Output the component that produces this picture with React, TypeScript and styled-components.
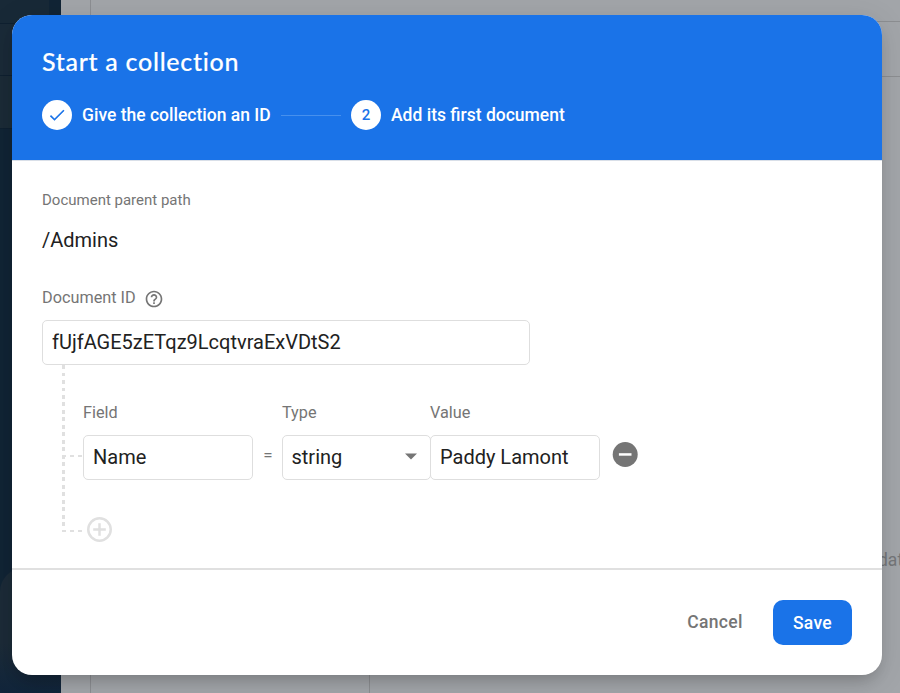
import React from "react";
import styled, { createGlobalStyle } from "styled-components";

const GlobalStyle = createGlobalStyle`
  * { box-sizing: border-box; }
  html, body { margin: 0; height: 100%; overflow: hidden; }
  body { font-family: Roboto, "Liberation Sans", sans-serif; color: #212121; }
  button, input { font-family: inherit; }
`;

const Page = styled.div`
  position: relative;
  display: flex;
  width: 900px;
  height: 693px;
  overflow: hidden;
  background: #a2a5a9;
`;

const Sidebar = styled.div`
  display: flex;
  flex: none;
  flex-direction: column;
  width: 61px;
  background: #112435;
`;

const SidebarItem = styled.div<{ $height: number; $tone: string }>`
  width: 49px;
  height: ${(p) => p.$height}px;
  background: ${(p) => p.$tone};
  border-bottom: 1px solid #0f2030;
`;

const SidebarCard = styled.div`
  width: 61px;
  height: 126px;
  margin-top: 439px;
  border-radius: 24px 0 0 0;
  background: linear-gradient(#1c2b38 60%, #11253b);
`;

const Gutter = styled.div`
  flex: none;
  width: 30px;
  border-right: 1px solid #8c8e92;
`;

const Main = styled.div`
  display: flex;
  flex: 1;
  flex-direction: column;
  min-width: 0;
`;

const MainRow = styled.div<{ $height: number }>`
  height: ${(p) => p.$height}px;
  border-bottom: 1px solid #8c8e91;
`;

const Columns = styled.div`
  display: flex;
  flex: 1;
`;

const ListColumn = styled.div`
  flex: none;
  width: 279px;
  border-right: 1px solid #8c8e91;
`;

const EmptyState = styled.div`
  flex: 1;
  min-width: 0;
  padding: 472px 0 0 508px;
  font-size: 17.5px;
  line-height: 22px;
  color: #747679;
  white-space: nowrap;
`;

const Dialog = styled.section`
  position: absolute;
  left: 12px;
  top: 15px;
  display: flex;
  flex-direction: column;
  width: 870px;
  height: 660px;
  border-radius: 20px;
  background: #fff;
  overflow: hidden;
  box-shadow: 0 10px 16px -6px rgba(0, 0, 0, 0.2), 0 5px 30px rgba(0, 0, 0, 0.1);
`;

const Header = styled.header`
  height: 146px;
  padding: 29px 30px 0;
  border-bottom: 1px solid #d9dfe8;
  background: #1a73e8;
  color: #fff;
`;

const Title = styled.h1`
  margin: 0;
  font-family: Lato, sans-serif;
  font-size: 25px;
  font-weight: 500;
  line-height: 35px;
  letter-spacing: 0.71px;
  -webkit-text-stroke: 0.15px #fff;
`;

const Steps = styled.div`
  display: flex;
  align-items: center;
  height: 30px;
  margin-top: 21px;
`;

const StepMark = styled.span`
  display: flex;
  align-items: center;
  justify-content: center;
  width: 30px;
  height: 30px;
  margin-right: 10px;
  border-radius: 50%;
  background: #fff;
  color: #1a73e8;
  font-size: 15px;
  font-weight: 500;
`;

const StepLabel = styled.span<{ $width: number }>`
  width: ${(p) => p.$width}px;
  font-size: 17.5px;
  font-weight: 500;
  line-height: 24px;
  white-space: nowrap;
`;

const StepLine = styled.span`
  width: 60px;
  height: 1px;
  margin: 1px 10px 0;
  background: #4790ed;
`;

const Body = styled.div`
  height: 407px;
  padding: 29px 30px 0;
`;

const Label = styled.div<{ $size?: number }>`
  font-size: ${(p) => p.$size ?? 16.25}px;
  line-height: 20px;
  color: #757575;
  white-space: nowrap;
`;

const ParentPath = styled.div`
  margin-top: 18px;
  font-size: 20px;
  line-height: 24px;
`;

const IdLabelRow = styled.div`
  display: flex;
  gap: 8.6px;
  margin: 36px 0 12px;
  height: 20px;

  svg { margin-top: 0.6px; }
`;

const TextField = styled.input<{ $width: number }>`
  display: block;
  width: ${(p) => p.$width}px;
  height: 45px;
  padding: 0 9px 2px;
  border: 1px solid #dedede;
  border-radius: 5px;
  outline: none;
  background: #fff;
  color: #212121;
  font-size: 20px;
`;

const Tree = styled.div`
  display: flex;
  padding-left: 20px;
`;

const Branch = styled.div`
  display: flex;
  flex-direction: column;
  justify-content: space-between;
  width: 21px;
  height: 167px;
  padding-top: 90px;
  background: repeating-linear-gradient(#e0e0e0 0 3.75px, transparent 3.75px 7.5px) 0 0 / 3px 165px no-repeat;
`;

const Twig = styled.span`
  width: 20px;
  height: 2px;
  background: repeating-linear-gradient(90deg, #e0e0e0 0 4px, transparent 4px 8px);
`;

const Fields = styled.div`
  padding-top: 38px;
`;

const FieldRow = styled.div`
  display: flex;
  align-items: flex-end;
`;

const FieldColumn = styled.div`
  display: flex;
  flex-direction: column;
  gap: 12px;
`;

const Equals = styled.span`
  width: 29px;
  height: 45px;
  padding-left: 1px;
  font-size: 17px;
  line-height: 41px;
  text-align: center;
  color: #757575;
`;

const Select = styled.button`
  display: flex;
  align-items: center;
  justify-content: space-between;
  width: 149px;
  height: 45px;
  margin-right: -1px;
  padding: 0 12px 2px 8.5px;
  border: 1px solid #dedede;
  border-radius: 5px;
  background: #fff;
  color: #212121;
  font-size: 20px;
`;

const IconButton = styled.button<{ $margin: string }>`
  display: block;
  width: 26px;
  height: 26px;
  margin: ${(p) => p.$margin};
  padding: 0;
  border: 0;
  background: none;
`;

const Footer = styled.footer`
  display: flex;
  justify-content: flex-end;
  align-items: flex-start;
  flex: 1;
  padding: 30px;
  border-top: 2px solid #e0e0e0;
`;

const Action = styled.button<{ $primary?: boolean }>`
  width: ${(p) => (p.$primary ? 79 : 96)}px;
  height: 45px;
  margin-left: ${(p) => (p.$primary ? 10 : 0)}px;
  padding: ${(p) => (p.$primary ? "0" : "0 0 2px")};
  border: 0;
  border-radius: 10px;
  background: ${(p) => (p.$primary ? "#1a73e8" : "transparent")};
  color: ${(p) => (p.$primary ? "#fff" : "#757575")};
  font-size: 17.5px;
  font-weight: 500;
  letter-spacing: 0.31px;
`;

const CheckIcon = () => (
  <svg width="20" height="20" viewBox="0 0 24 24" fill="currentColor">
    <path d="M9 16.17 4.83 12l-1.42 1.41L9 19 21 7l-1.41-1.41z" />
  </svg>
);

const HelpIcon = () => (
  <svg width="20" height="20" viewBox="0 0 24 24" fill="#757575">
    <path d="M11 18h2v-2h-2v2zm1-16C6.48 2 2 6.48 2 12s4.48 10 10 10 10-4.48 10-10S17.52 2 12 2zm0 18c-4.41 0-8-3.59-8-8s3.59-8 8-8 8 3.59 8 8-3.59 8-8 8zm0-14c-2.21 0-4 1.79-4 4h2c0-1.1.9-2 2-2s2 .9 2 2c0 2-3 1.75-3 5h2c0-2.25 3-2.5 3-5 0-2.21-1.79-4-4-4z" />
  </svg>
);

const ArrowIcon = () => (
  <svg width="14" height="7" viewBox="0 0 14 7" fill="#757575">
    <path d="M1 .5h12L7 6.5z" />
  </svg>
);

const RemoveIcon = () => (
  <svg width="26" height="26" viewBox="0 0 26 26">
    <circle cx="13.2" cy="12.5" r="12.5" fill="#757575" />
    <path d="M6.9 11.2h12.6v2.5H6.9z" fill="#fff" />
  </svg>
);

const AddIcon = () => (
  <svg width="26" height="26" viewBox="0 0 26 26" fill="none" stroke="#e0e0e0" strokeWidth="2.5">
    <circle cx="12.5" cy="12.5" r="11.25" />
    <path d="M12.5 6.2v12.6M6.2 12.5h12.6" />
  </svg>
);

export default function App() {
  return (
    <>
      <GlobalStyle />
      <Page>
        <Sidebar>
          <SidebarItem $height={24} $tone="#182937" />
          <SidebarItem $height={53} $tone="#1a2a38" />
          <SidebarItem $height={53} $tone="#1b2b37" />
          <SidebarCard />
        </Sidebar>
        <Gutter />
        <Main>
          <MainRow $height={22} />
          <MainRow $height={55} />
          <Columns>
            <ListColumn />
            <EmptyState>dat</EmptyState>
          </Columns>
        </Main>

        <Dialog>
          <Header>
            <Title>Start a collection</Title>
            <Steps>
              <StepMark><CheckIcon /></StepMark>
              <StepLabel $width={189}>Give the collection an ID</StepLabel>
              <StepLine />
              <StepMark>2</StepMark>
              <StepLabel $width={174}>Add its first document</StepLabel>
            </Steps>
          </Header>

          <Body>
            <Label $size={15}>Document parent path</Label>
            <ParentPath>/Admins</ParentPath>
            <IdLabelRow>
              <Label>Document ID</Label>
              <HelpIcon />
            </IdLabelRow>
            <TextField $width={488} defaultValue="fUjfAGE5zETqz9LcqtvraExVDtS2" />
            <Tree>
              <Branch>
                <Twig />
                <Twig />
              </Branch>
              <Fields>
                <FieldRow>
                  <FieldColumn>
                    <Label>Field</Label>
                    <TextField $width={170} defaultValue="Name" />
                  </FieldColumn>
                  <Equals>=</Equals>
                  <FieldColumn>
                    <Label>Type</Label>
                    <Select>string<ArrowIcon /></Select>
                  </FieldColumn>
                  <FieldColumn>
                    <Label>Value</Label>
                    <TextField $width={170} defaultValue="Paddy Lamont" />
                  </FieldColumn>
                  <IconButton $margin="0 0 12px 12px"><RemoveIcon /></IconButton>
                </FieldRow>
                <IconButton $margin="37px 0 0 4px"><AddIcon /></IconButton>
              </Fields>
            </Tree>
          </Body>

          <Footer>
            <Action>Cancel</Action>
            <Action $primary>Save</Action>
          </Footer>
        </Dialog>
      </Page>
    </>
  );
}
